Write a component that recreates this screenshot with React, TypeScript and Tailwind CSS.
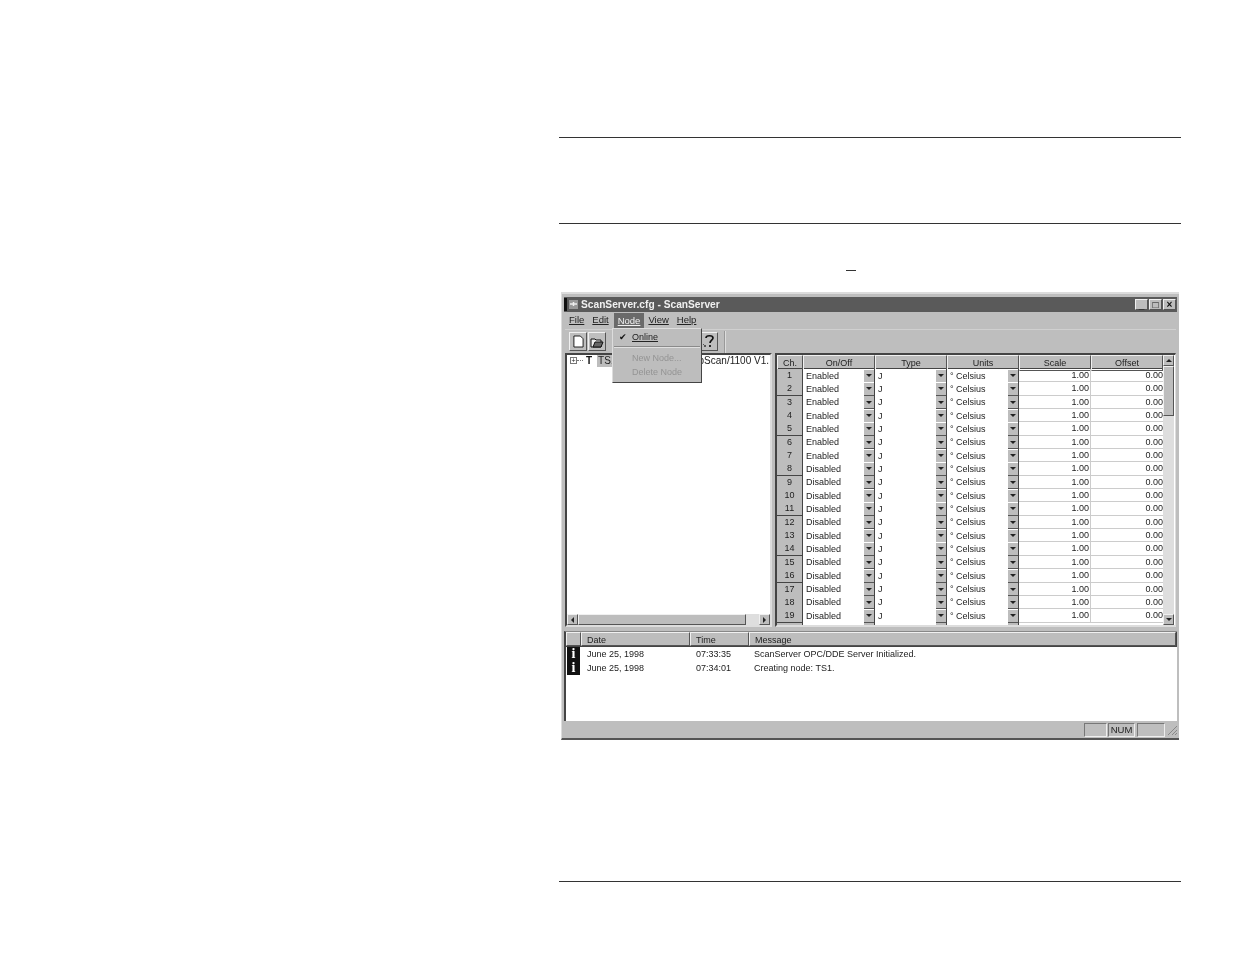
import React from "react";

const rows = Array.from({ length: 19 }, (_, i) => ({ ch: i + 1, on: i < 7 ? "Enabled" : "Disabled" }));
const raised = "border border-t-[#f0f0f0] border-l-[#f0f0f0] border-r-[#555] border-b-[#555]";
const sunken = "border border-t-[#777] border-l-[#777] border-r-[#eee] border-b-[#eee]";

function Drop() {
  return (
    <span className="w-[10px] h-[13px] bg-[#bdbdbd] border-b border-[#555] flex items-center justify-center shrink-0">
      <span className="w-0 h-0 border-x-[3px] border-x-transparent border-t-[3px] border-t-[#222]" />
    </span>
  );
}

function ComboCell({ text }: { text: string }) {
  return (
    <div className="flex items-center h-full pl-[3px] bg-white border-r border-[#444] overflow-hidden">
      <span className="flex-1 truncate">{text}</span>
      <Drop />
    </div>
  );
}

function ScrollArrow({ dir }: { dir: "up" | "down" | "left" | "right" }) {
  const tri =
    dir === "up"
      ? "border-x-[3px] border-x-transparent border-b-[3px] border-b-[#222]"
      : dir === "down"
      ? "border-x-[3px] border-x-transparent border-t-[3px] border-t-[#222]"
      : dir === "left"
      ? "border-y-[3px] border-y-transparent border-r-[3px] border-r-[#222]"
      : "border-y-[3px] border-y-transparent border-l-[3px] border-l-[#222]";
  return (
    <span className={`w-[11px] h-[11px] shrink-0 bg-[#bdbdbd] flex items-center justify-center ${raised}`}>
      <span className={`w-0 h-0 ${tri}`} />
    </span>
  );
}

function Grid() {
  return (
    <div className="ml-[3px] flex-1 h-[274px] flex bg-white overflow-hidden border-2 border-[#444] border-r border-r-[#ddd] border-b-[#ddd]">
      <div className="w-[386px] overflow-hidden text-[9px] text-[#222]">
        <div className="grid grid-cols-[26px_72px_72px_72px_72px_72px] h-[14px] bg-[#bdbdbd] text-center border-b border-[#444]">
          {["Ch.", "On/Off", "Type", "Units", "Scale", "Offset"].map((h) => (
            <div key={h} className={`${raised} border-r-[#333] leading-[14px]`}>{h}</div>
          ))}
        </div>
        {rows.map((r) => (
          <div key={r.ch} className="grid grid-cols-[26px_72px_72px_72px_72px_72px] h-[13.35px] leading-[13px] border-b border-[#ccc]">
            <div className="bg-[#bdbdbd] text-center border-r border-b border-[#444]">{r.ch}</div>
            <ComboCell text={r.on} />
            <ComboCell text="J" />
            <ComboCell text="° Celsius" />
            <div className="text-right pr-[1px] border-r border-[#ccc]">1.00</div>
            <div className="text-right">0.00</div>
          </div>
        ))}
        <div className="grid grid-cols-[26px_72px_72px_72px_72px_72px] h-[13px] leading-[13px]">
          <div className="bg-[#bdbdbd] border-r border-[#444]" />
          <ComboCell text="Disabled" />
          <ComboCell text="J" />
          <ComboCell text="° Celsius" />
          <div className="text-right pr-[1px]">1.00</div>
          <div className="text-right">0.00</div>
        </div>
      </div>
      <div className="w-[11px] h-full flex flex-col bg-[#dedede]">
        <ScrollArrow dir="up" />
        <div className={`h-[50px] bg-[#bdbdbd] ${raised}`} />
        <div className="flex-1" />
        <ScrollArrow dir="down" />
      </div>
    </div>
  );
}

function InfoIcon() {
  return (
    <span className="w-[13px] h-[14px] bg-[#111] flex items-center justify-center text-white font-bold text-[14px] leading-none font-['Liberation_Serif',serif]">
      i
    </span>
  );
}

export default function App() {
  return (
    <div className="relative w-[1235px] h-[954px] bg-white font-['Liberation_Sans',Arial,sans-serif] overflow-hidden">
      <div className="ml-[559px] w-[622px] pt-[137px]">
        <div className="h-px bg-[#333]" />
        <div className="h-[85px]" />
        <div className="h-px bg-[#333]" />
        <div className="h-[46px]" />
        <div className="ml-[287px] w-[10px] h-px bg-[#333]" />
        <div className="h-[21px]" />

        <div className="relative ml-[2px] w-[618px] h-[448px] bg-[#bebebe] border-t-2 border-l border-[#dcdcdc] border-r-[#999] border-b-2 border-b-[#555] text-[#222] blur-[0.7px]">
          {/* title bar */}
          <div className="mx-[2px] mt-[3px] h-[15px] bg-[#5a5a5a] flex items-center pr-[1px] text-[#f0f0f0] font-bold text-[10.2px]">
            <span className="w-[15px] h-[13px] flex items-center justify-center mr-[2px]">
              <svg viewBox="0 0 15 13" className="w-[15px] h-[13px]">
                <rect x="0" y="0" width="3" height="13" fill="#111" />
                <rect x="5" y="2" width="9" height="9" fill="#999" />
                <path d="M6 6h7M9.5 4v4" stroke="#eee" strokeWidth="1.5" />
              </svg>
            </span>
            <span className="flex-1">ScanServer.cfg - ScanServer</span>
            {["_", "□", "×"].map((c) => (
              <span key={c} className={`w-[13px] h-[11px] ml-[1px] bg-[#bdbdbd] text-[#111] ${raised} flex items-center justify-center text-[10px] leading-none font-bold`}>{c}</span>
            ))}
          </div>
          {/* menu */}
          <div className="mx-[3px] h-[17px] flex items-center text-[9.5px] pl-[4px] gap-[9px]">
            <span className="underline decoration-1">File</span>
            <span className="underline decoration-1 -ml-[1px]">Edit</span>
            <span className="underline decoration-1 bg-[#6a6a6a] text-[#f0f0f0] px-[4px] -mx-[4px] h-[15px] leading-[15px]">Node</span>
            <span className="underline decoration-1 -ml-[1px]">View</span>
            <span className="underline decoration-1 -ml-[1px]">Help</span>
          </div>
          {/* toolbar */}
          <div className="mx-[3px] h-[24px] border-t border-[#d0d0d0] flex items-center pl-[4px] gap-[1px]">
            <span className={`w-[18px] h-[19px] ${raised} flex items-center justify-center`}>
              <svg viewBox="0 0 12 14" className="w-[11px] h-[13px]"><path d="M1 1h7l3 3v9H1z" fill="#fff" stroke="#111" /></svg>
            </span>
            <span className={`w-[18px] h-[19px] ${raised} flex items-center justify-center`}>
              <svg viewBox="0 0 14 12" className="w-[14px] h-[12px]"><path d="M1 3h4l1 1h5v7H1z" fill="#eee" stroke="#111" /><path d="M3 11l2-5h8l-2 5z" fill="#666" stroke="#111" /></svg>
            </span>
            <span className="w-[92px]" />
            <span className={`w-[18px] h-[19px] ${raised} flex items-center justify-center`}>
              <svg viewBox="0 0 14 15" className="w-[14px] h-[15px]">
                <path d="M4 4c0-3 7-3 7 0 0 2-3 2.500-3 5M8 11v2" fill="none" stroke="#111" strokeWidth="1.700" />
                <path d="M1 10l3 3M2 13l2-2" stroke="#555" />
              </svg>
            </span>
            <span className="ml-[5px] w-[2px] h-[22px] border-l border-[#999] border-r border-r-[#ddd]" />
          </div>
          {/* panes */}
          <div className="mx-[3px] flex h-[274px]">
            <div className="w-[207px] h-full bg-white border-2 border-[#444] border-r-[#ddd] border-b-[#ddd] flex flex-col">
              <div className="flex-1 flex items-start text-[10px] leading-[12px] pl-[3px] overflow-hidden">
                <span className="mt-[2px] w-[7px] h-[7px] border border-[#777] flex items-center justify-center text-[7px] leading-none shrink-0">+</span>
                <span className="mt-[5px] w-[6px] border-t border-dotted border-[#777] shrink-0" />
                <span className="ml-[3px] font-bold text-[#111]">T</span>
                <span className="ml-[5px] bg-[#bdbdbd] px-[1px]">TS1</span>
                <span className="ml-auto pr-[1px] whitespace-nowrap">pScan/1100 V1.</span>
              </div>
              <div className="h-[11px] flex bg-[#dedede]">
                <ScrollArrow dir="left" />
                <div className={`w-[168px] bg-[#bdbdbd] ${raised}`} />
                <div className="flex-1" />
                <ScrollArrow dir="right" />
              </div>
            </div>
            <Grid />
          </div>
          {/* log */}
          <div className="mx-[2px] mt-[4px] h-[90px] border-l-2 border-[#444] border-t border-t-[#888] bg-white text-[9px] flex flex-col">
            <div className="h-[15px] bg-[#bdbdbd] flex leading-[14px] border-b border-[#444] border-r border-r-[#444] shrink-0">
              <div className={`w-[15px] ${raised}`} />
              <div className={`w-[109px] pl-[5px] ${raised}`}>Date</div>
              <div className={`w-[59px] pl-[5px] ${raised}`}>Time</div>
              <div className={`flex-1 pl-[5px] ${raised}`}>Message</div>
            </div>
            {[
              ["June 25, 1998", "07:33:35", "ScanServer OPC/DDE Server Initialized."],
              ["June 25, 1998", "07:34:01", "Creating node: TS1."],
            ].map(([d, t, m]) => (
              <div key={t} className="flex h-[14px] leading-[14px]">
                <div className="w-[15px] flex justify-center"><InfoIcon /></div>
                <div className="w-[109px] pl-[6px]">{d}</div>
                <div className="w-[59px] pl-[6px]">{t}</div>
                <div className="flex-1 pl-[5px]">{m}</div>
              </div>
            ))}
          </div>
          {/* status */}
          <div className="mx-[1px] h-[17px] flex items-center justify-end gap-[1px] text-[9.5px]">
            <span className={`w-[23px] h-[14px] ${sunken}`} />
            <span className={`w-[27px] h-[14px] ${sunken} text-center leading-[12px]`}>NUM</span>
            <span className={`w-[28px] h-[14px] ml-[1px] ${sunken}`} />
            <svg viewBox="0 0 12 12" className="w-[12px] h-[12px]"><path d="M11 2L2 11M11 6l-5 5M11 9l-2 2" stroke="#888" /></svg>
          </div>

          {/* dropdown */}
          <div className="absolute left-[50px] top-[34px] w-[90px] h-[55px] bg-[#bdbdbd] border border-t-[#ddd] border-l-[#ddd] border-r-[#444] border-b-[#444] text-[9px] z-10">
            <div className="flex items-center h-[17px]">
              <span className="w-[19px] text-center text-[9px] text-[#111]">✔</span>
              <span className="underline decoration-1">Online</span>
            </div>
            <div className="h-[2px] mx-[1px] border-t border-[#8a8a8a] border-b-[#e0e0e0] border-b" />
            <div className="mt-[3px] pl-[19px] text-[#949494] leading-[14px]">New Node...</div>
            <div className="pl-[19px] text-[#949494] leading-[14px]">Delete Node</div>
          </div>
        </div>

        <div className="h-[141px]" />
        <div className="h-px bg-[#333]" />
      </div>
    </div>
  );
}
